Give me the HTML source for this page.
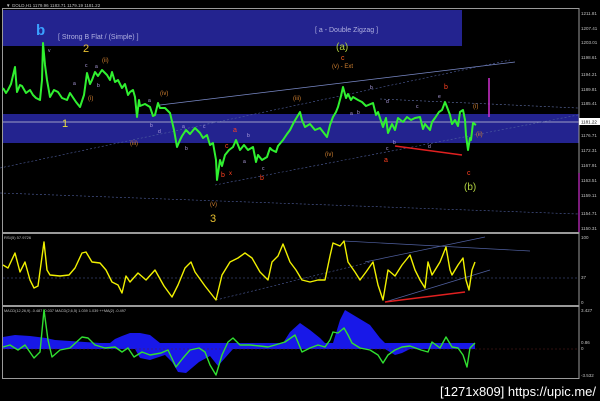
<!DOCTYPE html>
<html><head><meta charset="utf-8"><style>
html,body{margin:0;padding:0;background:#000;width:600px;height:401px;overflow:hidden}
svg{display:block}
text{font-family:"Liberation Sans",sans-serif}
</style></head><body>
<svg width="600" height="401" viewBox="0 0 600 401" xmlns="http://www.w3.org/2000/svg">
<rect width="600" height="401" fill="#000"/>
<rect x="3" y="10" width="459" height="36" fill="#23238f"/>
<rect x="3" y="114" width="576" height="29" fill="#23238f"/>
<line x1="3" y1="122" x2="579" y2="122" stroke="#c8c8d8" stroke-width="0.8"/>
<rect x="2.5" y="8.5" width="576.5" height="370" fill="none" stroke="#9a9a9a" stroke-width="1"/>
<line x1="3" y1="233" x2="579" y2="233" stroke="#9a9a9a" stroke-width="2"/>
<line x1="3" y1="306" x2="579" y2="306" stroke="#9a9a9a" stroke-width="2"/>
<line x1="160" y1="105" x2="515" y2="62" stroke="#7a8ac8" stroke-width="0.8"/>
<line x1="0" y1="168" x2="510" y2="60" stroke="#5060a0" stroke-width="0.6" stroke-dasharray="2,2"/>
<line x1="215" y1="185" x2="578" y2="115" stroke="#5060a0" stroke-width="0.6" stroke-dasharray="2,2"/>
<line x1="380" y1="99" x2="578" y2="108" stroke="#6070a8" stroke-width="0.6" stroke-dasharray="2,2"/>
<line x1="0" y1="193" x2="578" y2="214" stroke="#5060a0" stroke-width="0.6" stroke-dasharray="2,2"/>
<line x1="395" y1="146" x2="462" y2="155" stroke="#e02020" stroke-width="1.5"/>
<line x1="489" y1="78" x2="489" y2="117" stroke="#d030d0" stroke-width="1.5"/>
<line x1="579" y1="173" x2="579" y2="232" stroke="#d030d0" stroke-width="1.2"/>
<polyline fill="none" stroke="#30f030" stroke-width="2" stroke-linejoin="round" points="3,88 6,93 8,90 11,84 15,67 17,92 20,85 22,86 26,93 30,90 33,95 36,98 40,100 42,80 43,43 45,65 47,80 50,97 54,90 58,92 62,98 67,100 70,93 72,96 76,102 80,107 84,95 87,73 90,84 92,80 95,72 98,76 102,70 107,75 110,80 112,72 115,82 118,80 122,88 125,84 128,95 130,92 133,90 135,97 137,117 139,100 140,106 145,104 150,107 153,116 155,115 158,103 160,108 165,108 170,113 174,130 177,147 180,140 182,136 186,130 190,134 195,128 200,133 203,138 207,135 210,145 213,143 216,160 217,180 220,160 222,166 225,155 229,150 233,147 236,140 240,150 244,145 248,150 253,147 256,162 258,155 262,160 267,157 270,148 272,150 276,152 278,146 283,140 287,134 290,130 294,122 297,117 300,112 302,120 305,127 310,124 315,130 320,128 327,137 330,125 333,117 336,112 338,107 341,96 343,87 346,98 348,94 351,100 353,97 358,100 362,102 366,106 373,103 376,115 378,112 383,127 386,118 388,133 392,124 395,130 398,118 403,122 407,117 411,120 415,118 420,117 423,129 425,124 430,130 432,122 435,118 439,112 442,110 445,102 447,107 450,115 452,124 455,120 458,126 460,112 463,110 465,120 466,135 468,150 470,138 471,140 473,123 476,125"/>
<text x="36" y="35" fill="#3aa0ff" font-size="15" font-weight="bold">b</text>
<text x="58" y="39" fill="#b0b0e0" font-size="7">[ Strong B Flat / (Simple) ]</text>
<text x="83" y="52" fill="#e8c030" font-size="11">2</text>
<text x="62" y="127" fill="#e8e040" font-size="11">1</text>
<text x="210" y="222" fill="#e8c030" font-size="11">3</text>
<text x="210" y="206" fill="#d08030" font-size="6">(v)</text>
<text x="315" y="32" fill="#b0b0e0" font-size="7">[ a - Double Zigzag ]</text>
<text x="336" y="50" fill="#b0d040" font-size="10">(a)</text>
<text x="341" y="60" fill="#ff6020" font-size="7">c</text>
<text x="332" y="68" fill="#d08030" font-size="6">(v) - Ext</text>
<text x="464" y="190" fill="#b0d040" font-size="10">(b)</text>
<text x="467" y="175" fill="#ff4020" font-size="7">c</text>
<text x="444" y="89" fill="#ff4020" font-size="7">b</text>
<text x="384" y="162" fill="#ff4020" font-size="7">a</text>
<text x="233" y="132" fill="#ff4020" font-size="7">a</text>
<text x="225" y="148" fill="#ff4020" font-size="7">c</text>
<text x="221" y="177" fill="#ff4020" font-size="7">b</text>
<text x="229" y="175" fill="#ff4020" font-size="6">x</text>
<text x="260" y="180" fill="#ff4020" font-size="7">b</text>
<text x="130" y="145" fill="#d08030" font-size="6">(iii)</text>
<text x="160" y="95" fill="#d08030" font-size="6">(iv)</text>
<text x="102" y="62" fill="#d08030" font-size="6">(ii)</text>
<text x="88" y="100" fill="#d08030" font-size="6">(i)</text>
<text x="293" y="100" fill="#d08030" font-size="6">(iii)</text>
<text x="325" y="156" fill="#d08030" font-size="6">(iv)</text>
<text x="476" y="136" fill="#d08030" font-size="6">(ii)</text>
<text x="473" y="108" fill="#d08030" font-size="6">(i)</text>
<g fill="#b0a0e0" font-size="5">
<text x="48" y="52">v</text><text x="85" y="67">c</text><text x="95" y="68">a</text><text x="73" y="85">a</text><text x="97" y="87">b</text><text x="148" y="102">a</text><text x="150" y="127">b</text><text x="158" y="133">d</text><text x="182" y="128">a</text><text x="185" y="150">b</text><text x="203" y="128">c</text><text x="247" y="137">b</text><text x="243" y="163">a</text><text x="262" y="170">c</text><text x="370" y="89">b</text><text x="386" y="103">d</text><text x="416" y="108">c</text><text x="438" y="98">e</text><text x="393" y="144">b</text><text x="386" y="150">c</text><text x="428" y="148">d</text><text x="350" y="115">a</text><text x="357" y="114">b</text>
</g>
<g fill="#c0c0c0" font-size="4.5">
<text x="581" y="15">1211.81</text><text x="581" y="30">1207.41</text><text x="581" y="44">1203.01</text><text x="581" y="59">1198.61</text><text x="581" y="76">1194.21</text><text x="581" y="91">1189.81</text><text x="581" y="105">1185.41</text><text x="581" y="137">1176.71</text><text x="581" y="152">1172.31</text><text x="581" y="167">1167.91</text><text x="581" y="182">1163.51</text><text x="581" y="197">1159.11</text><text x="581" y="215">1154.71</text><text x="581" y="230">1150.31</text>
<text x="581" y="239">100</text><text x="581" y="279">37</text><text x="581" y="304">0</text><text x="581" y="312">3.427</text><text x="581" y="344">0.86</text><text x="581" y="350">0</text><text x="581" y="377">-3.532</text>
</g>
<rect x="579" y="118" width="21" height="7" fill="#fff"/>
<text x="581" y="123.5" fill="#000" font-size="4.5">1181.22</text>
<text x="6" y="7" fill="#c0c0c0" font-size="4.5">▼ GOLD,H1  1179.96 1183.71 1179.19 1181.22</text>
<text x="4" y="239" fill="#c0c0c0" font-size="4">RSI(5) 57.9726</text>
<line x1="3" y1="278" x2="578" y2="278" stroke="#5060a0" stroke-width="0.6" stroke-dasharray="2,2"/>
<line x1="216" y1="300" x2="370" y2="262" stroke="#5060a0" stroke-width="0.6" stroke-dasharray="2,2"/>
<line x1="344" y1="241" x2="530" y2="251" stroke="#5060a0" stroke-width="0.7"/>
<line x1="365" y1="262" x2="485" y2="237" stroke="#5060a0" stroke-width="0.7"/>
<line x1="385" y1="302" x2="490" y2="270" stroke="#5060a0" stroke-width="0.7"/>
<line x1="385" y1="302" x2="465" y2="292" stroke="#e02020" stroke-width="1.5"/>
<polyline fill="none" stroke="#f0f000" stroke-width="1.4" stroke-linejoin="round" points="3,265 8,268 15,253 20,272 25,262 30,280 34,288 38,286 44,242 47,270 50,275 60,276 69,275 75,268 82,253 86,252 92,262 100,263 106,270 112,282 118,285 122,293 126,276 130,282 138,273 146,280 155,270 164,286 172,297 178,285 185,268 191,262 195,272 205,286 216,300 222,275 230,262 238,258 245,253 252,258 260,272 268,280 272,262 278,256 283,244 290,262 296,270 302,280 310,282 318,280 325,280 330,256 333,243 340,246 344,241 348,262 355,272 360,280 366,272 373,262 378,285 383,300 388,270 395,276 402,265 410,255 415,270 420,280 425,288 428,262 432,275 440,262 446,247 450,270 452,275 458,265 463,258 466,280 469,290 472,270 475,262"/>
<text x="4" y="312" fill="#c0c0c0" font-size="3.8">MACD(12,26,9) -0.487 -0.037  MACD(2,6,5) 1.039 1.039  ++MA(2) -0.497</text>
<path fill="#1818e8" d="M3,343 L3,337 L15,335 L30,336 L46,338 L55,340 L100,343 L110,343 L115,339 L122,336 L130,333 L140,333 L150,335 L160,343 L283,343 L290,332 L300,323 L310,330 L320,338 L325,343 L333,343 L340,320 L345,310 L355,316 L370,325 L380,338 L385,343 L475,343 L475,349 L3,349 Z"/>
<path fill="#1818e8" d="M135,349 L140,358 L150,360 L165,355 L172,362 L178,372 L186,373 L199,362 L210,356 L218,366 L225,358 L233,349 Z"/>
<path fill="#1818e8" d="M385,349 L395,355 L402,353 L410,349 Z"/>
<line x1="3" y1="349" x2="578" y2="349" stroke="#602020" stroke-width="0.5" stroke-dasharray="2,2"/>
<polyline fill="none" stroke="#30e030" stroke-width="1.4" stroke-linejoin="round" points="3,347 10,345 18,350 25,345 34,358 40,352 44,310 48,340 52,357 60,350 70,348 82,337 88,338 95,345 105,348 115,347 122,352 128,348 134,357 142,352 150,355 161,353 168,350 176,367 183,358 190,350 199,348 205,352 210,365 216,375 222,355 228,342 233,338 240,345 250,345 260,346 268,347 275,345 285,342 295,335 302,352 310,348 318,345 325,347 330,340 333,332 338,333 344,328 348,335 352,343 360,348 370,350 378,355 383,363 388,355 395,350 402,347 410,346 421,350 428,352 432,342 440,348 446,337 452,347 458,348 463,355 467,367 470,348 475,343"/>
<text x="440" y="396" fill="#ffffff" font-size="13" textLength="156" lengthAdjust="spacingAndGlyphs">[1271x809] https://upic.me/</text>
</svg>
</body></html>
